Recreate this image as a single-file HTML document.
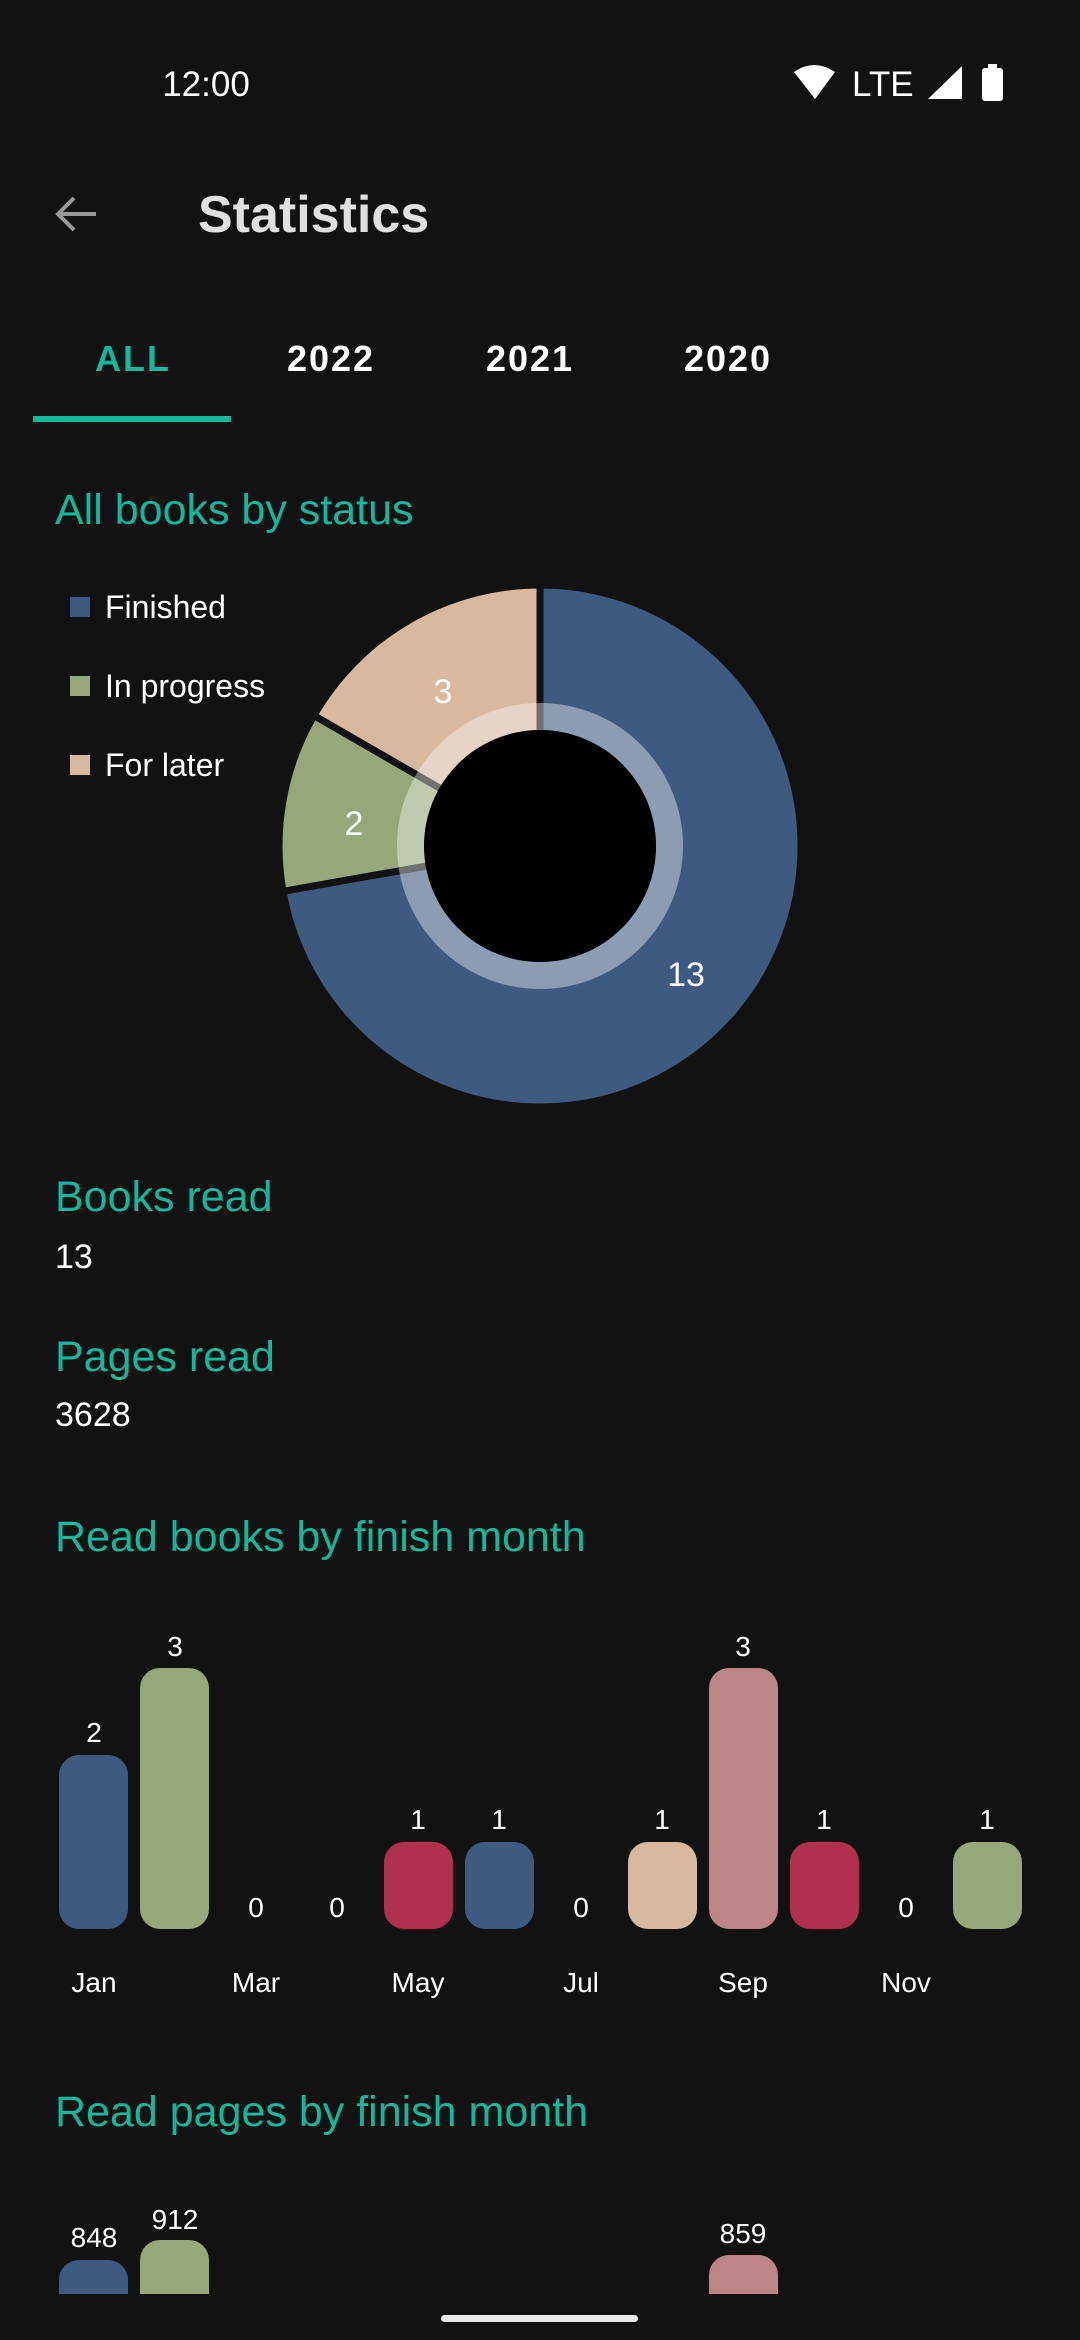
<!DOCTYPE html>
<html><head><meta charset="utf-8"><style>
html,body{margin:0;padding:0;background:#121212;}
svg{display:block}
</style></head><body>
<svg width="1080" height="2340" viewBox="0 0 1080 2340" xmlns="http://www.w3.org/2000/svg" font-family="Liberation Sans, sans-serif">
<rect width="1080" height="2340" fill="#121212"/>
<!-- status bar -->
<text x="206" y="96" fill="#fff" font-size="35" text-anchor="middle">12:00</text>
<path d="M794 72 Q814 58 835 72 L815 99 Z" fill="#fff"/>
<text x="852" y="96" fill="#fff" font-size="35">LTE</text>
<path d="M928 99 L962 66 L962 99 Z" fill="#fff"/>
<rect x="982" y="68" width="21" height="33" rx="3" fill="#fff"/>
<rect x="988" y="64" width="9" height="5" fill="#fff"/>
<!-- toolbar -->
<path d="M96 214 H60 M74 198 L58 214 L74 230" stroke="#9a9a9a" stroke-width="4" fill="none"/>
<text x="198" y="232" fill="#e0e0e0" font-size="52" font-weight="bold">Statistics</text>
<!-- tabs -->
<g font-size="36" font-weight="bold" text-anchor="middle" letter-spacing="2">
<text x="133" y="371" fill="#12b89c">ALL</text>
<text x="331" y="371" fill="#fff">2022</text>
<text x="530" y="371" fill="#fff">2021</text>
<text x="728" y="371" fill="#fff">2020</text>
</g>
<rect x="33" y="416" width="198" height="6" fill="#12b89c"/>
<!-- section 1 -->
<g fill="#12b89c" font-size="43">
<text x="55" y="524">All books by status</text>
<text x="55" y="1211">Books read</text>
<text x="55" y="1371">Pages read</text>
<text x="55" y="1551">Read books by finish month</text>
<text x="55" y="2126">Read pages by finish month</text>
</g>
<g fill="#fff" font-size="34">
<text x="55" y="1268">13</text>
<text x="55" y="1426">3628</text>
</g>
<!-- legend -->
<rect x="70" y="597" width="20" height="20" fill="#3f5a80"/>
<rect x="70" y="676" width="20" height="20" fill="#97a77b"/>
<rect x="70" y="755" width="20" height="20" fill="#d9b8a0"/>
<g fill="#fff" font-size="32">
<text x="105" y="618">Finished</text>
<text x="105" y="697">In progress</text>
<text x="105" y="776">For later</text>
</g>
<!-- donut -->
<g stroke="#121212" stroke-width="7">
<path d="M540 846 L540 585 A261 261 0 1 1 283 891.3 Z" fill="#3f5a80"/>
<path d="M540 846 L283 891.3 A261 261 0 0 1 314 715.5 Z" fill="#97a77b"/>
<path d="M540 846 L314 715.5 A261 261 0 0 1 540 585 Z" fill="#d9b8a0"/>
</g>
<circle cx="540" cy="846" r="129.5" fill="none" stroke="#fff" stroke-opacity="0.4" stroke-width="27"/>
<circle cx="540" cy="846" r="116" fill="#000"/>
<g fill="#fff" font-size="34" text-anchor="middle">
<text x="443" y="703">3</text>
<text x="354" y="835">2</text>
<text x="686" y="986">13</text>
</g>
<!-- bars books -->
<g>
<rect x="59" y="1755" width="69" height="174" rx="20" fill="#3f5a80"/>
<rect x="140" y="1668" width="69" height="261" rx="20" fill="#97a77b"/>
<rect x="384" y="1842" width="69" height="87" rx="20" fill="#b0304f"/>
<rect x="465" y="1842" width="69" height="87" rx="20" fill="#3f5a80"/>
<rect x="628" y="1842" width="69" height="87" rx="20" fill="#d9b8a0"/>
<rect x="709" y="1668" width="69" height="261" rx="20" fill="#bd8585"/>
<rect x="790" y="1842" width="69" height="87" rx="20" fill="#b0304f"/>
<rect x="953" y="1842" width="69" height="87" rx="20" fill="#97a77b"/>
</g>
<g fill="#fff" font-size="28" text-anchor="middle">
<text x="94" y="1742">2</text>
<text x="175" y="1656">3</text>
<text x="256" y="1917">0</text>
<text x="337" y="1917">0</text>
<text x="418" y="1829">1</text>
<text x="499" y="1829">1</text>
<text x="581" y="1917">0</text>
<text x="662" y="1829">1</text>
<text x="743" y="1656">3</text>
<text x="824" y="1829">1</text>
<text x="906" y="1917">0</text>
<text x="987" y="1829">1</text>
<text x="94" y="1992">Jan</text>
<text x="256" y="1992">Mar</text>
<text x="418" y="1992">May</text>
<text x="581" y="1992">Jul</text>
<text x="743" y="1992">Sep</text>
<text x="906" y="1992">Nov</text>
<text x="94" y="2247">848</text>
<text x="175" y="2229">912</text>
<text x="743" y="2243">859</text>
</g>
<!-- bars pages -->
<rect x="59" y="2260" width="69" height="60" rx="20" fill="#3f5a80"/>
<rect x="140" y="2240" width="69" height="80" rx="20" fill="#97a77b"/>
<rect x="709" y="2255" width="69" height="65" rx="20" fill="#bd8585"/>
<rect x="0" y="2294" width="1080" height="46" fill="#121212"/>
<rect x="441" y="2315" width="197" height="7" rx="3.5" fill="#e8e8e8"/>
</svg>
</body></html>
